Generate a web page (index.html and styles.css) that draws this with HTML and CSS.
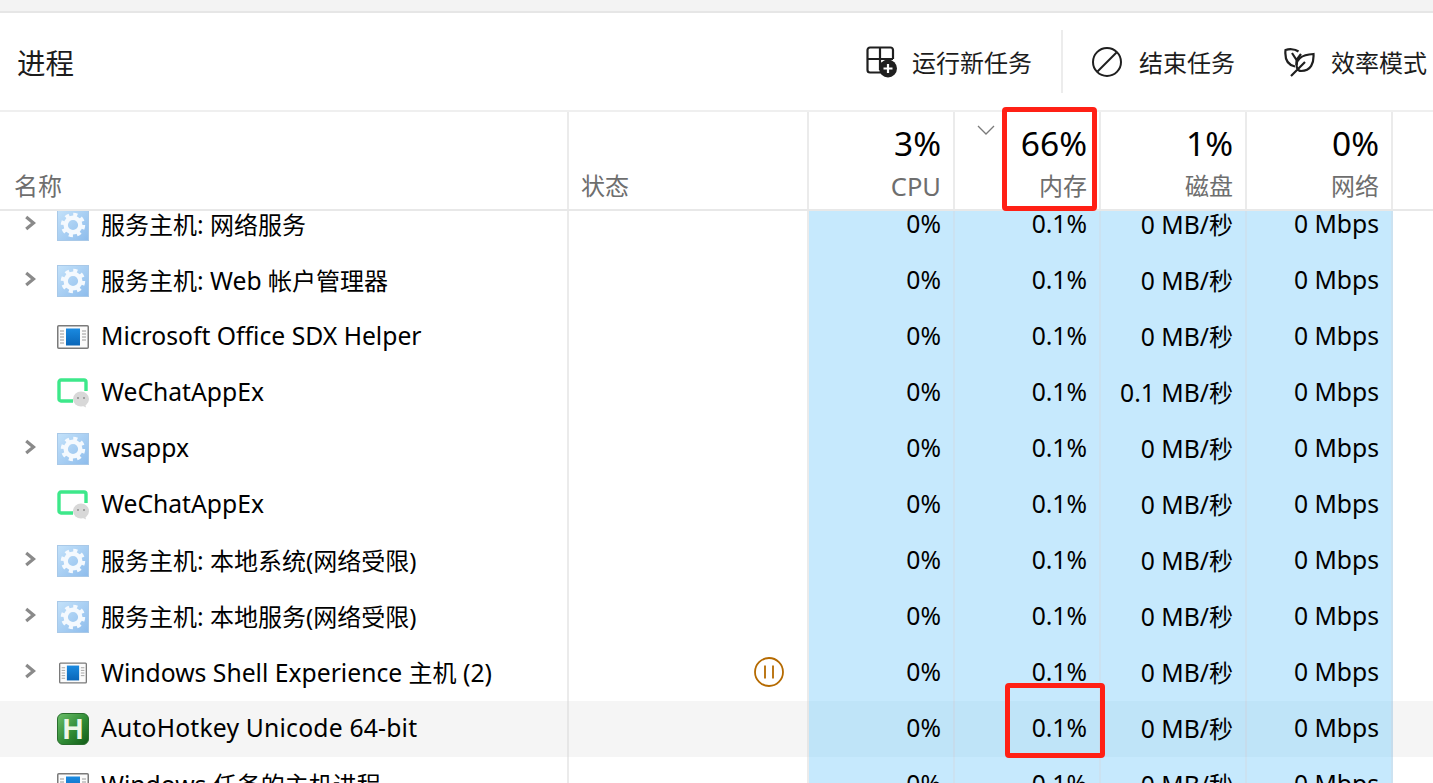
FILE: index.html
```html
<!DOCTYPE html>
<html lang="zh-CN">
<head>
<meta charset="utf-8">
<title>进程</title>
<link rel="stylesheet" href="styles.css">
</head>
<body>
<svg class="defs" width="0" height="0" aria-hidden="true">
  <defs>
    <linearGradient id="gearBg" x1="0" y1="0" x2="1" y2="1"><stop offset="0" stop-color="#c4e2fa"/><stop offset="1" stop-color="#8dbcec"/></linearGradient>
    <linearGradient id="winBlue" x1="0" y1="0" x2="0" y2="1"><stop offset="0" stop-color="#1a8ae0"/><stop offset="1" stop-color="#0a66b8"/></linearGradient>
    <linearGradient id="ahkBg" x1="0" y1="0" x2="1" y2="1"><stop offset="0" stop-color="#6cc06a"/><stop offset=".55" stop-color="#2f8a34"/><stop offset="1" stop-color="#115a16"/></linearGradient>
    <symbol id="gear" viewBox="0 0 32 32">
      <rect x=".5" y=".5" width="31" height="31" fill="url(#gearBg)" stroke="#a9c9e8"/>
      <circle cx="16" cy="16" r="10.2" fill="none" stroke="#f4f9fe" stroke-width="4" stroke-dasharray="4 4"/>
      <circle cx="16" cy="16" r="7.3" fill="none" stroke="#f4f9fe" stroke-width="4.4"/>
    </symbol>
    <symbol id="win" viewBox="0 0 32 24">
      <rect x=".75" y=".75" width="30.5" height="22.5" rx="1" fill="#fbfbfb" stroke="#7a7a7a" stroke-width="1.5"/>
      <rect x="9" y="3.5" width="14" height="17" fill="url(#winBlue)"/>
      <path d="M3 6h4M3 9h4M3 12h4M3 15h4M3 18h4M25 6h4M25 9h4M25 12h4M25 15h4" stroke="#9a9a9a" stroke-width="1"/>
    </symbol>
    <symbol id="wechat" viewBox="0 0 32 30">
      <path d="M16 23H4a2 2 0 0 1-2-2V4a2 2 0 0 1 2-2h23a2 2 0 0 1 2 2v9" fill="none" stroke="#3de88a" stroke-width="3.400"/>
      <ellipse cx="24" cy="21" rx="8" ry="7.500" fill="#d8d8d8"/>
      <path d="M24 27l5 2.500-1-5z" fill="#d8d8d8"/>
      <circle cx="21" cy="20" r="1" fill="#8f8f8f"/><circle cx="27" cy="20" r="1" fill="#8f8f8f"/>
    </symbol>
    <symbol id="ahk" viewBox="0 0 32 32">
      <rect x=".5" y=".5" width="31" height="31" rx="5.500" fill="url(#ahkBg)" stroke="#2a6e2e"/>
      <text x="16" y="26" text-anchor="middle" class="ahk-letter">H</text>
    </symbol>
    <symbol id="chev" viewBox="0 0 12 16">
      <path d="M2.200 2l7.300 6-7.300 6" fill="none" stroke="#8a8a8a" stroke-width="3.200"/>
    </symbol>
  </defs>
</svg>

<div class="strip"></div>

<header class="toolbar">
  <h1 class="title">进程</h1>
  <div class="actions">
    <button class="action first">
      <svg class="aicon" viewBox="0 0 32 32" width="32" height="32"><path d="M14 2v22M1.500 13h25.500M27 13V4a2.500 2.500 0 0 0-2.500-2.500H4A2.500 2.500 0 0 0 1.500 4v20A2.500 2.500 0 0 0 4 26.500h11" fill="none" stroke="#1f1f1f" stroke-width="2.200"/><circle cx="22" cy="22.500" r="9" fill="#1f1f1f"/><path d="M22 18v9M17.500 22.500h9" stroke="#fff" stroke-width="2.200"/></svg>
      <span>运行新任务</span>
    </button>
    <span class="divider"></span>
    <button class="action">
      <svg class="aicon" viewBox="0 0 32 32" width="32" height="32"><circle cx="16" cy="16" r="14" fill="none" stroke="#1f1f1f" stroke-width="2"/><path d="M6.500 25.500L25.500 6.500" stroke="#1f1f1f" stroke-width="2"/></svg>
      <span>结束任务</span>
    </button>
    <button class="action">
      <svg class="aicon" viewBox="0 0 32 32" width="32" height="32"><path d="M12 20.500C5 19 1.500 14 2.500 4c3-1 9-1.500 13 1.500M9 7l4.500 7M18 8l-4.500 6M13.500 14v5" fill="none" stroke="#1f1f1f" stroke-width="2.200"/><path d="M14 22C12 14 18 8.500 30.500 8c.5 9-2.500 17-12.500 17-2 0-3-1-4-3zM8 30l14-14" fill="none" stroke="#1f1f1f" stroke-width="2.200"/></svg>
      <span>效率模式</span>
    </button>
  </div>
</header>

<main class="table">
  <div class="row head">
    <div class="cell hname"><span class="hlabel">名称</span></div>
    <div class="cell hstatus"><span class="hlabel">状态</span></div>
    <div class="cell hnum"><span class="pct">3%</span><span class="hlabel lat">CPU</span></div>
    <div class="cell hnum">
      <svg class="sort" viewBox="0 0 18 10" width="18" height="10"><path d="M1 1l8 8 8-8" fill="none" stroke="#7a7a7a" stroke-width="1.300"/></svg>
      <span class="pct">66%</span><span class="hlabel">内存</span>
    </div>
    <div class="cell hnum"><span class="pct">1%</span><span class="hlabel">磁盘</span></div>
    <div class="cell hnum"><span class="pct">0%</span><span class="hlabel">网络</span></div>
    <div class="rest"></div>
  </div>

  <div class="body">
    <div class="rows">
      <div class="row item">
        <div class="cell name"><span class="exp"><svg class="chev"><use href="#chev"/></svg></span><svg class="ico gear"><use href="#gear"/></svg><span class="ntext"><span class="cn">服务主机</span>: <span class="cn">网络服务</span></span></div>
        <div class="cell status"></div>
        <div class="cell num"><span>0%</span></div><div class="cell num"><span>0.1%</span></div><div class="cell num"><span>0 MB/<span class="cn">秒</span></span></div><div class="cell num"><span>0 Mbps</span></div><div class="rest"></div>
      </div>
      <div class="row item">
        <div class="cell name"><span class="exp"><svg class="chev"><use href="#chev"/></svg></span><svg class="ico gear"><use href="#gear"/></svg><span class="ntext"><span class="cn">服务主机</span>: Web <span class="cn">帐户管理器</span></span></div>
        <div class="cell status"></div>
        <div class="cell num"><span>0%</span></div><div class="cell num"><span>0.1%</span></div><div class="cell num"><span>0 MB/<span class="cn">秒</span></span></div><div class="cell num"><span>0 Mbps</span></div><div class="rest"></div>
      </div>
      <div class="row item">
        <div class="cell name"><span class="exp"></span><svg class="ico win"><use href="#win"/></svg><span class="ntext">Microsoft Office SDX Helper</span></div>
        <div class="cell status"></div>
        <div class="cell num"><span>0%</span></div><div class="cell num"><span>0.1%</span></div><div class="cell num"><span>0 MB/<span class="cn">秒</span></span></div><div class="cell num"><span>0 Mbps</span></div><div class="rest"></div>
      </div>
      <div class="row item">
        <div class="cell name"><span class="exp"></span><svg class="ico wechat"><use href="#wechat"/></svg><span class="ntext">WeChatAppEx</span></div>
        <div class="cell status"></div>
        <div class="cell num"><span>0%</span></div><div class="cell num"><span>0.1%</span></div><div class="cell num"><span>0.1 MB/<span class="cn">秒</span></span></div><div class="cell num"><span>0 Mbps</span></div><div class="rest"></div>
      </div>
      <div class="row item">
        <div class="cell name"><span class="exp"><svg class="chev"><use href="#chev"/></svg></span><svg class="ico gear"><use href="#gear"/></svg><span class="ntext">wsappx</span></div>
        <div class="cell status"></div>
        <div class="cell num"><span>0%</span></div><div class="cell num"><span>0.1%</span></div><div class="cell num"><span>0 MB/<span class="cn">秒</span></span></div><div class="cell num"><span>0 Mbps</span></div><div class="rest"></div>
      </div>
      <div class="row item">
        <div class="cell name"><span class="exp"></span><svg class="ico wechat"><use href="#wechat"/></svg><span class="ntext">WeChatAppEx</span></div>
        <div class="cell status"></div>
        <div class="cell num"><span>0%</span></div><div class="cell num"><span>0.1%</span></div><div class="cell num"><span>0 MB/<span class="cn">秒</span></span></div><div class="cell num"><span>0 Mbps</span></div><div class="rest"></div>
      </div>
      <div class="row item">
        <div class="cell name"><span class="exp"><svg class="chev"><use href="#chev"/></svg></span><svg class="ico gear"><use href="#gear"/></svg><span class="ntext"><span class="cn">服务主机</span>: <span class="cn">本地系统(网络受限)</span></span></div>
        <div class="cell status"></div>
        <div class="cell num"><span>0%</span></div><div class="cell num"><span>0.1%</span></div><div class="cell num"><span>0 MB/<span class="cn">秒</span></span></div><div class="cell num"><span>0 Mbps</span></div><div class="rest"></div>
      </div>
      <div class="row item">
        <div class="cell name"><span class="exp"><svg class="chev"><use href="#chev"/></svg></span><svg class="ico gear"><use href="#gear"/></svg><span class="ntext"><span class="cn">服务主机</span>: <span class="cn">本地服务(网络受限)</span></span></div>
        <div class="cell status"></div>
        <div class="cell num"><span>0%</span></div><div class="cell num"><span>0.1%</span></div><div class="cell num"><span>0 MB/<span class="cn">秒</span></span></div><div class="cell num"><span>0 Mbps</span></div><div class="rest"></div>
      </div>
      <div class="row item">
        <div class="cell name"><span class="exp"><svg class="chev"><use href="#chev"/></svg></span><svg class="ico win small"><use href="#win"/></svg><span class="ntext">Windows Shell Experience <span class="cn">主机</span> (2)</span></div>
        <div class="cell status">
          <svg class="pause" viewBox="0 0 30 30" width="30" height="30"><circle cx="15" cy="15" r="14" fill="none" stroke="#b56a00" stroke-width="1.800"/><path d="M11 8.500v13M19 8.500v13" stroke="#b56a00" stroke-width="1.800"/></svg>
        </div>
        <div class="cell num"><span>0%</span></div><div class="cell num"><span>0.1%</span></div><div class="cell num"><span>0 MB/<span class="cn">秒</span></span></div><div class="cell num"><span>0 Mbps</span></div><div class="rest"></div>
      </div>
      <div class="row item hover">
        <div class="cell name"><span class="exp"></span><svg class="ico gear"><use href="#ahk"/></svg><span class="ntext wide">AutoHotkey Unicode 64-bit</span></div>
        <div class="cell status"></div>
        <div class="cell num"><span>0%</span></div><div class="cell num"><span>0.1%</span></div><div class="cell num"><span>0 MB/<span class="cn">秒</span></span></div><div class="cell num"><span>0 Mbps</span></div><div class="rest"></div>
      </div>
      <div class="row item">
        <div class="cell name"><span class="exp"></span><svg class="ico win"><use href="#win"/></svg><span class="ntext">Windows <span class="cn">任务的主机进程</span></span></div>
        <div class="cell status"></div>
        <div class="cell num"><span>0%</span></div><div class="cell num"><span>0.1%</span></div><div class="cell num"><span>0 MB/<span class="cn">秒</span></span></div><div class="cell num"><span>0 Mbps</span></div><div class="rest"></div>
      </div>
    </div>
  </div>
</main>

<div class="mark mark-head"></div>
<div class="mark mark-cell"></div>
</body>
</html>
```

FILE: styles.css
```css
* { box-sizing: border-box; }
html, body { margin: 0; padding: 0; height: 783px; overflow: hidden; background: #fff; }
body {
  position: relative;
  display: flex;
  flex-direction: column;
  font-family: "Noto Sans", "Noto Sans CJK SC", sans-serif;
  color: #000;
}
.defs { position: absolute; }
.ahk-letter { font-family: "Liberation Sans", sans-serif; font-weight: 700; font-size: 29px; fill: #eef6e8; }

.strip { height: 13px; flex: none; background: #f3f3f3; border-bottom: 2px solid #e6e6e6; }

.toolbar {
  height: 99px;
  flex: none;
  display: flex;
  align-items: center;
  justify-content: space-between;
  border-bottom: 2px solid #efefef;
  padding: 0 6px 0 17px;
}
.title { margin: 1px 0 0; font-size: 28.500px; font-weight: 400; line-height: 40px; color: #1c1c1c; font-family: "Noto Sans CJK SC", sans-serif; }
.actions { display: flex; align-items: center; }
.action {
  display: flex;
  align-items: center;
  gap: 16px;
  margin-left: 48px;
  padding: 0;
  border: 0;
  background: none;
  font-family: "Noto Sans CJK SC", sans-serif;
  font-size: 24px;
  color: #1c1c1c;
  line-height: 34px;
}
.action.first { margin-left: 0; gap: 14px; }
.divider { width: 2px; height: 63px; background: #ececec; margin-left: 29px; margin-right: -20px; }
.aicon { flex: none; }

.table { flex: 1; display: flex; flex-direction: column; min-height: 0; }
.row {
  display: grid;
  grid-template-columns: 569px 240px 146px 146px 146px 146px 1fr;
}
.head { height: 99px; flex: none; border-bottom: 2px solid #e8e8e8; }
.head .cell { border-right: 2px solid #ebebeb; position: relative; }
.hlabel { font-size: 24px; line-height: 32px; color: #6e6e6e; }
.hlabel.lat { font-size: 25.500px; }
.hname, .hstatus { display: flex; align-items: flex-end; padding-bottom: 7px; }
.hname { padding-left: 14px; }
.hstatus { padding-left: 12px; }
.hnum { display: flex; flex-direction: column; align-items: flex-end; justify-content: flex-end; padding: 0 12px 7px 0; }
.pct { font-size: 33.500px; line-height: 44px; color: #000; margin-bottom: 5px; }
.sort { position: absolute; left: 22px; top: 13px; }

.body { flex: 1; overflow: hidden; min-height: 0; }
.rows { margin-top: -14px; }
.item { height: 56px; }
.item .cell { display: flex; align-items: center; font-size: 24.700px; }
.cn { font-size: 24px; }
.name { border-right: 2px solid #ebebeb; }
.status { border-right: 2px solid #ebebeb; justify-content: flex-end; padding-right: 23px; }
.num {
  justify-content: flex-end;
  padding: 0 12px 4px 0;
  background: #c6e9fd;
  border-right: 2px solid #cbe2f1;
}
.hover { background: #f5f5f5; }
.hover .num { background: #bfe4f8; border-right-color: #c5dcec; }
.hover .name, .hover .status { border-right-color: #e6e6e6; }
.exp { width: 57px; flex: none; display: flex; padding-left: 24px; }
.chev { width: 12px; height: 16px; margin-bottom: 4px; }
.ico { flex: none; width: 32px; height: 32px; }
.ico.win { height: 24px; }
.ico.small { width: 28px; height: 22px; margin: 0 2px; }
.ico.wechat { height: 30px; }
.ntext { margin-left: 12px; padding-bottom: 4px; white-space: nowrap; }
.ntext.wide { letter-spacing: .2px; }
.pause { flex: none; margin-bottom: 2px; }

.mark { position: absolute; border: 5px solid #ff2015; border-radius: 4px; pointer-events: none; }
.mark-head { left: 1002px; top: 107px; width: 95px; height: 104px; }
.mark-cell { left: 1005px; top: 683px; width: 100px; height: 75px; }
```
